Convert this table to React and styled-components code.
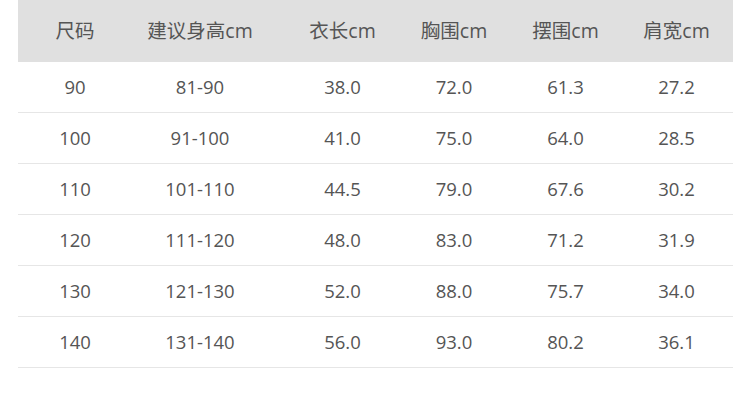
import React from "react";
import styled, { createGlobalStyle } from "styled-components";

const GlobalStyle = createGlobalStyle`
  html, body {
    margin: 0;
    padding: 0;
    background: #fff;
  }
`;

const Page = styled.div`
  padding: 0 17px 0 18px;
  font-family: "Open Sans", "Noto Sans CJK SC", sans-serif;
  color: #555;
`;

const Table = styled.div`
  width: 715px;
`;

const Row = styled.div`
  display: grid;
  grid-template-columns: 114px 136px 149px 74px 149px 73px;
  padding-right: 20px;
  height: ${({ head }) => (head ? "62px" : "50px")};
  background: ${({ head }) => (head ? "#e0e0e0" : "#fff")};
  border-bottom: ${({ head }) => (head ? "none" : "1px solid #e6e6e6")};
  font-size: ${({ head }) => (head ? "19.5px" : "18.5px")};
`;

const Cell = styled.div`
  display: flex;
  align-items: center;
  justify-content: center;
  line-height: 1;
  white-space: nowrap;
`;

const headers = ["尺码", "建议身高cm", "衣长cm", "胸围cm", "摆围cm", "肩宽cm"];

const rows = [
  ["90", "81-90", "38.0", "72.0", "61.3", "27.2"],
  ["100", "91-100", "41.0", "75.0", "64.0", "28.5"],
  ["110", "101-110", "44.5", "79.0", "67.6", "30.2"],
  ["120", "111-120", "48.0", "83.0", "71.2", "31.9"],
  ["130", "121-130", "52.0", "88.0", "75.7", "34.0"],
  ["140", "131-140", "56.0", "93.0", "80.2", "36.1"],
];

export default function App() {
  return (
    <Page>
      <GlobalStyle />
      <Table>
        <Row head>
          {headers.map((h) => (
            <Cell key={h}>{h}</Cell>
          ))}
        </Row>
        {rows.map((r) => (
          <Row key={r[0]}>
            {r.map((v, i) => (
              <Cell key={i}>{v}</Cell>
            ))}
          </Row>
        ))}
      </Table>
    </Page>
  );
}
